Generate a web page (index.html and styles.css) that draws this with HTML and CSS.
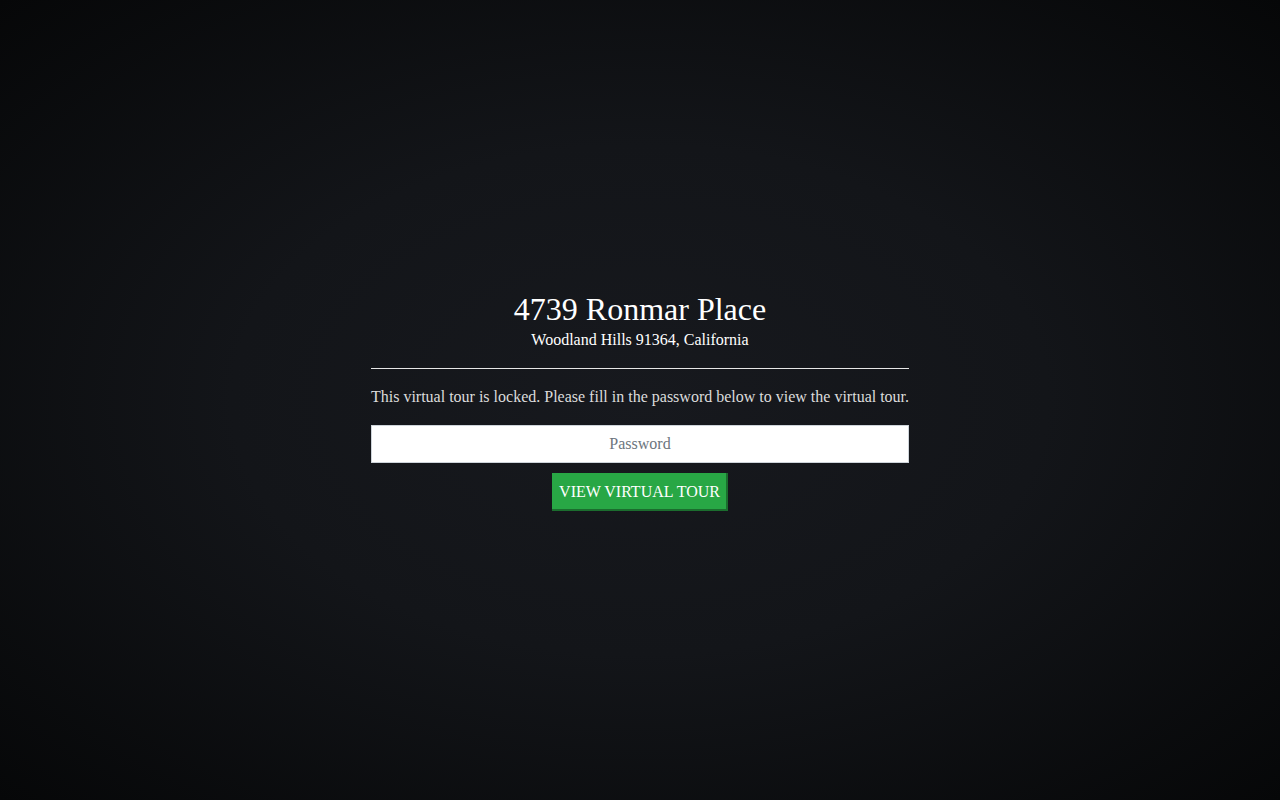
FILE: index.html
```html
<!DOCTYPE html>
<html lang="en">
<head>
<meta charset="utf-8">
<title>4739 Ronmar Place</title>
<link rel="stylesheet" href="styles.css">
</head>
<body>
<main class="page">
  <section class="lock">
    <h1 class="title">4739 Ronmar Place</h1>
    <div class="subtitle">Woodland Hills 91364, California</div>
    <hr class="rule">
    <p class="message">This virtual tour is locked. Please fill in the password below to view the virtual tour.</p>
    <form class="form" onsubmit="return false;">
      <input class="password" type="password" placeholder="Password">
      <button class="submit" type="submit">VIEW VIRTUAL TOUR</button>
    </form>
  </section>
</main>
</body>
</html>
```
FILE: styles.css
```css
html, body {
  margin: 0;
  padding: 0;
  height: 100%;
}
body {
  background: radial-gradient(ellipse at center, #17191e 0%, #131519 45%, #060708 100%);
  font-family: "Liberation Serif", "Times New Roman", serif;
  color: #ffffff;
}
.page {
  height: 100%;
  display: flex;
  align-items: center;
  justify-content: center;
}
.lock {
  width: 538px;
  padding-top: 1px;
  display: flex;
  flex-direction: column;
  align-items: center;
  text-align: center;
}
.title {
  margin: 0;
  font-size: 32px;
  font-weight: normal;
  line-height: 37px;
}
.subtitle {
  margin-top: 3px;
  font-size: 16px;
  line-height: 18px;
}
.rule {
  align-self: stretch;
  margin: 19px 0 0;
  border: 0;
  border-top: 1px solid #e6e6e6;
  height: 0;
}
.message {
  margin: 19px 0 0;
  font-size: 16px;
  line-height: 18px;
  color: #dcdcdc;
  white-space: nowrap;
}
.form {
  align-self: stretch;
  display: flex;
  flex-direction: column;
  align-items: center;
  margin-top: 19px;
}
.password {
  box-sizing: border-box;
  width: 100%;
  height: 38px;
  margin: 0;
  border: 1px solid #ced4da;
  background: #ffffff;
  font-family: "Liberation Serif", "Times New Roman", serif;
  font-size: 16px;
  text-align: center;
  color: #333;
  outline: none;
}
.password::placeholder {
  color: #6c757d;
}
.submit {
  box-sizing: border-box;
  margin-top: 10px;
  height: 38px;
  width: 176px;
  padding: 2px 0 0 1px;
  background: #28a745;
  border: 0;
  border-right: 2px solid #1b6d2e;
  border-bottom: 2px solid #1b6d2e;
  color: #ffffff;
  font-family: "Liberation Serif", "Times New Roman", serif;
  font-size: 16px;
  cursor: pointer;
}
```
